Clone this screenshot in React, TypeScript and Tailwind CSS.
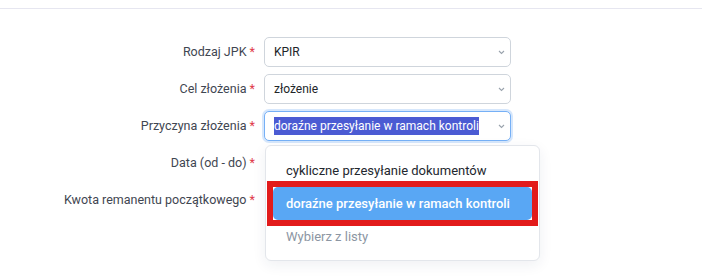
import React from 'react';

const rows = [
  { label: 'Rodzaj JPK', value: 'KPIR' },
  { label: 'Cel złożenia', value: 'złożenie' },
  { label: 'Przyczyna złożenia', value: 'doraźne przesyłanie w ramach kontroli', open: true },
  { label: 'Data (od - do)' },
  { label: 'Kwota remanentu początkowego' },
];

const options = [
  { text: 'cykliczne przesyłanie dokumentów' },
  { text: 'doraźne przesyłanie w ramach kontroli', active: true },
  { text: 'Wybierz z listy', placeholder: true },
];

const Chevron: React.FC = () => (
  <svg width="7" height="5" viewBox="0 0 7 5" className="shrink-0">
    <polyline points="1,1 3.5,3.5 6,1" fill="none" stroke="#9aa3ad" strokeWidth="1.1" />
  </svg>
);

const App: React.FC = () => {
  return (
    <div className="min-h-screen bg-white font-['Roboto',sans-serif]">
      {/* Header line */}
      <div className="h-[9px] border-b border-[#e6e6f0]" />

      {/* Form */}
      <div className="pt-[28px] flex flex-col gap-[7px]">
        {rows.map((row) => (
          <div key={row.label} className="flex items-center h-[30px]">
            <label className="w-[255px] text-right text-[12.5px] text-[#3f4651]">
              {row.label} <span className="text-[#e03b4b]">*</span>
            </label>
            {row.value && (
              <div className="relative ml-[9px]">
                <div
                  className={`w-[247px] h-[30px] flex items-center justify-between pl-[9px] pr-[5px] rounded-[5px] border bg-white ${
                    row.open
                      ? 'border-[#76b0f6] shadow-[0_0_0_2px_rgba(120,175,245,0.3)]'
                      : 'border-[#cfd5dc]'
                  }`}
                >
                  <span className="text-[12px] text-[#212529]">
                    {row.open ? (
                      <span className="bg-[#4b5bd3] text-white py-[2px]">{row.value}</span>
                    ) : (
                      row.value
                    )}
                  </span>
                  <Chevron />
                </div>

                {/* Dropdown menu */}
                {row.open && (
                  <div className="absolute left-px top-[34px] z-10 w-[275px] rounded-[6px] border border-[#e3e6eb] bg-white pt-2 pb-[7px] px-[7px] shadow-[0_4px_14px_rgba(30,40,80,0.07)]">
                    {options.map((opt) => (
                      <div
                        key={opt.text}
                        className={`h-[33px] flex items-center pl-[13px] text-[13px] rounded-[5px] ${
                          opt.active
                            ? 'bg-[#59a7f4] text-white font-medium'
                            : opt.placeholder
                            ? 'text-[#8c96a3]'
                            : 'text-[#23272e]'
                        }`}
                      >
                        {opt.text}
                      </div>
                    ))}
                    {/* Highlight annotation */}
                    <div className="absolute left-px top-[35px] w-[271px] h-[45px] border-[6px] border-[#e21b1b] pointer-events-none" />
                  </div>
                )}
              </div>
            )}
          </div>
        ))}
      </div>
    </div>
  );
};

export default App;
